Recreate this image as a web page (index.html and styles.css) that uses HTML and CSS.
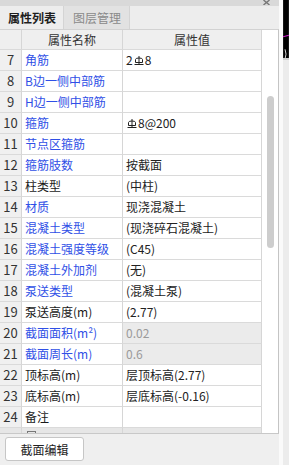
FILE: index.html
```html
<!DOCTYPE html>
<html lang="zh-CN">
<head>
  <meta charset="UTF-8">
  <title>属性列表</title>
  <link rel="stylesheet" href="styles.css">
</head>
<body>

  <div class="window">
    <div class="panel">
      <div class="titlebar">
        <svg class="close" width="7" height="5" viewBox="0 -2 7 5">
          <line x1="0.5" y1="-2" x2="6.5" y2="3" />
          <line x1="6.5" y1="-2" x2="0.5" y2="3" />
        </svg>
      </div>

      <div class="tabs">
        <div class="tab active">属性列表</div>
        <div class="tab">图层管理</div>
      </div>

      <div class="grid">
        <div class="table">
          <div class="row head">
            <div class="cell num"></div>
            <div class="cell name">属性名称</div>
            <div class="cell value">属性值</div>
          </div>
          <div id="rows"></div>
          <div class="row more">
            <div class="cell num"></div>
            <div class="cell name"><span class="expand"></span></div>
            <div class="cell value"></div>
          </div>
        </div>
        <div class="track"><div class="thumb"></div></div>
      </div>

      <div class="footer">
        <button class="btn">截面编辑</button>
      </div>
    </div>

    <div class="side">
      <div class="gap"></div>
      <div class="app">
        <svg class="view" width="6" height="60" viewBox="0 0 6 60">
          <rect width="6" height="60" fill="#000" />
          <line x1="0" y1="38" x2="6" y2="36.5" stroke="#e020e0" stroke-width="1" />
          <path d="M2 51 Q4 56 2 61" stroke="#ddd" fill="none" stroke-width="1" />
        </svg>
      </div>
    </div>
  </div>

  <script>
    // steel grade symbol (HRB400)
    const bar = '<svg class="bar" width="10" height="10" viewBox="0 0 10 10">' +
      '<line x1="5" y1="0" x2="5" y2="8.5" />' +
      '<path d="M1.5 6.5 V3.5 Q1.5 2 5 2 Q8.5 2 8.5 3.5 V6.5 Z" />' +
      '<line x1="0.5" y1="8.5" x2="9.5" y2="8.5" />' +
      '</svg>';

    const props = [
      [7, '角筋', true, '2' + bar + '8'],
      [8, 'B边一侧中部筋', true, ''],
      [9, 'H边一侧中部筋', true, ''],
      [10, '箍筋', true, ' ' + bar + '8@200'],
      [11, '节点区箍筋', true, ''],
      [12, '箍筋肢数', true, '按截面'],
      [13, '柱类型', false, '(中柱)'],
      [14, '材质', true, '现浇混凝土'],
      [15, '混凝土类型', true, '(现浇碎石混凝土)'],
      [16, '混凝土强度等级', true, '(C45)'],
      [17, '混凝土外加剂', true, '(无)'],
      [18, '泵送类型', true, '(混凝土泵)'],
      [19, '泵送高度(m)', false, '(2.77)'],
      [20, '截面面积(m²)', true, '0.02', true],
      [21, '截面周长(m)', true, '0.6', true],
      [22, '顶标高(m)', false, '层顶标高(2.77)'],
      [23, '底标高(m)', false, '层底标高(-0.16)'],
      [24, '备注', false, '']
    ];

    const container = document.getElementById('rows');

    props.forEach(([no, label, pub, val, locked]) => {
      const row = document.createElement('div');
      row.classList.add('row');

      const num = document.createElement('div');
      num.className = 'cell num';
      num.textContent = no;

      const name = document.createElement('div');
      name.className = 'cell name';
      if (pub) name.classList.add('public');
      name.textContent = label;

      const value = document.createElement('div');
      value.className = 'cell value';
      if (locked) value.classList.add('locked');
      value.innerHTML = val;

      row.append(num, name, value);
      container.appendChild(row);
    });
  </script>

</body>
</html>
```

FILE: styles.css
```css
* {
  box-sizing: border-box;
}

body {
  margin: 0;
  font-family: "Noto Sans CJK SC", "Liberation Sans", sans-serif;
  font-size: 12px;
  color: #222;
  background: #ececec;
}

.window {
  display: flex;
  width: 289px;
  height: 465px;
  overflow: hidden;
}

.panel {
  width: 279px;
  display: flex;
  flex-direction: column;
  background: #efefef;
}

.titlebar {
  height: 6px;
  background: #d9d9d9;
  display: flex;
  justify-content: flex-end;
  padding-right: 9px;
}

.close line {
  stroke: #777;
  stroke-width: 1.4;
}

.tabs {
  height: 23px;
  display: flex;
  background: #ededed;
}

.tab {
  height: 23px;
  line-height: 23px;
  padding: 0 9px;
  color: #8a8a8a;
  background: #e2e2e2;
  border-left: 1px solid #d4d4d4;
  border-right: 1px solid #d4d4d4;
  width: 67px;
  font-size: 12px;
  white-space: nowrap;
}

.tab.active {
  width: 63px;
  padding: 0 0 0 8px;
  color: #1e1e1e;
  font-weight: bold;
  background: #ededed;
  border: none;
}

.grid {
  height: 405px;
  display: flex;
  border-top: 1px solid #d2d2d2;
  border-bottom: 1px solid #c8c8c8;
  border-right: 1px solid #c4c4c4;
  background: #fff;
  overflow: hidden;
}

.table {
  width: 262px;
  flex-shrink: 0;
}

.row {
  display: grid;
  grid-template-columns: 22px 101px 139px;
  height: 21px;
}

.cell {
  border-right: 1px solid #d6d6d6;
  border-bottom: 1px solid #dadada;
  line-height: 20px;
  padding: 0 3px;
  white-space: nowrap;
  overflow: hidden;
  background: #fff;
}

.cell.num {
  padding: 0;
  text-align: center;
  font-size: 13px;
  color: #333;
  background: #f0f0f0;
}

.head {
  height: 20px;
}

.head .cell {
  line-height: 19px;
  text-align: center;
  color: #333;
  background: #efefef;
}

.name {
  color: #1a1a1a;
}

.name.public {
  color: #2f4fe6;
}

.value.locked {
  background: #ebebeb;
  color: #9a9a9a;
}

.bar {
  vertical-align: -1px;
  margin: 0 1px;
}

.bar line,
.bar path {
  stroke: #222;
  stroke-width: 1;
  fill: none;
}

.row.more {
  height: 5px;
}

.row.more .cell {
  background: #e6e6e6;
  border-bottom: none;
}

.expand {
  display: block;
  width: 9px;
  height: 9px;
  margin: 3px 0 0 2px;
  border: 1px solid #777;
}

.track {
  flex: 1;
  background: #fff;
  padding: 66px 0 0 5px;
}

.thumb {
  width: 7px;
  height: 152px;
  border-radius: 4px;
  background: #cdcdcd;
}

.footer {
  flex: 1;
  padding: 3px 0 0 5px;
  background: #efefef;
}

.btn {
  width: 79px;
  height: 24px;
  padding: 0;
  font-family: "Noto Sans CJK SC", sans-serif;
  font-size: 12px;
  color: #222;
  background: #fff;
  border: 1px solid #c6c6c6;
  border-radius: 3px;
}

.side {
  width: 10px;
  display: flex;
}

.gap {
  width: 4px;
  background: #fafafa;
}

.app {
  width: 6px;
  background: #ececec;
}

.view {
  display: block;
  border-bottom: 2px solid #d0d0d0;
}
```
